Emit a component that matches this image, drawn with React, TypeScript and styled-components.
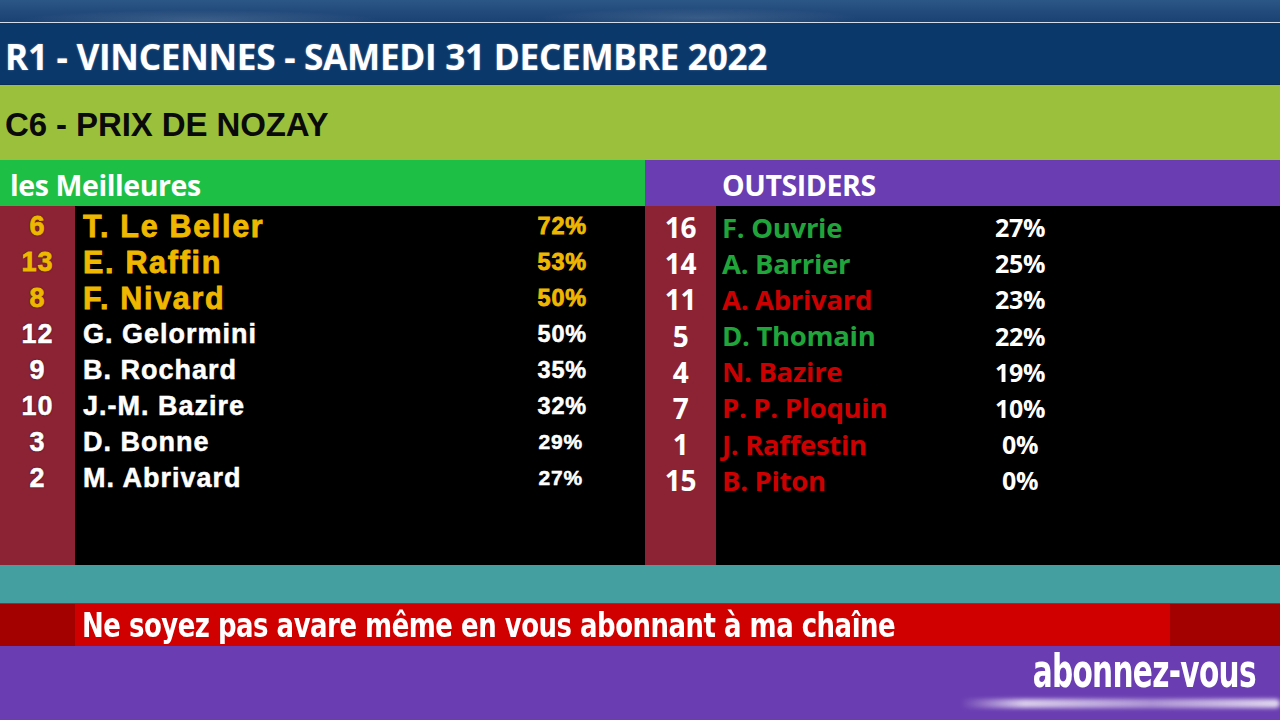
import React from 'react';
import styled, { createGlobalStyle } from 'styled-components';

const GlobalStyle = createGlobalStyle`
  html, body { margin: 0; padding: 0; background: #000; }
  body { width: 1280px; height: 720px; overflow: hidden; }
`;

const Screen = styled.div`
  width: 1280px;
  height: 720px;
  display: flex;
  flex-direction: column;
  overflow: hidden;
`;

const TopStrip = styled.div`
  flex: none;
  height: 22px;
  border-bottom: 1px solid #d3dde9;
  background:
    radial-gradient(ellipse 180px 10px at 200px 20px, rgba(255,255,255,0.14), transparent),
    radial-gradient(ellipse 160px 10px at 700px 18px, rgba(255,255,255,0.12), transparent),
    linear-gradient(180deg, #2b5786 0%, #21497a 60%, #1a4273 100%);
`;

const Header = styled.div`
  flex: none;
  height: 62px;
  box-sizing: border-box;
  display: flex;
  align-items: center;
  padding: 5px 0 0 5px;
  background: #0b386b;
  border-bottom: 1px solid #0a2f58;
  color: #fff;
  font-family: "Open Sans", sans-serif;
  font-weight: 700;
  font-size: 35.2px;
  letter-spacing: -0.3px;
  text-shadow: 0 0 2px rgba(255, 255, 255, 0.35);
`;

const RaceTitle = styled.div`
  flex: none;
  height: 75px;
  box-sizing: border-box;
  display: flex;
  align-items: center;
  padding: 4px 0 0 5px;
  background: #9bc13c;
  color: #0a0a0a;
  font-family: "Liberation Sans", Arial, sans-serif;
  font-weight: 700;
  font-size: 33px;
  letter-spacing: -0.1px;
`;

const Board = styled.div`
  flex: none;
  height: 405px;
  display: grid;
  grid-template-columns: 645px 635px;
`;

const Panel = styled.div`
  display: flex;
  flex-direction: column;
`;

const SectionHead = styled.div<{ $bg: string; $indent: number }>`
  flex: none;
  height: 46px;
  box-sizing: border-box;
  display: flex;
  align-items: center;
  padding: 3px 0 0 ${(p) => p.$indent}px;
  background: ${(p) => p.$bg};
  color: #fff;
  font-family: "Open Sans", sans-serif;
  font-weight: 700;
  font-size: 28.5px;
  letter-spacing: -0.4px;
`;

const Body = styled.div<{ $num: number; $top: number }>`
  flex: 1;
  padding-top: ${(p) => p.$top}px;
  background: linear-gradient(90deg, #8b2335 0, #8b2335 ${(p) => p.$num}px, #000 ${(p) => p.$num}px);
`;

const LeftRow = styled.div<{ $color: string; $big: boolean }>`
  height: 36px;
  display: grid;
  grid-template-columns: 75px 1fr 90px;
  align-items: center;
  padding-right: 58px;
  color: ${(p) => p.$color};
  font-family: "Liberation Sans", Arial, sans-serif;
  font-weight: 700;
  font-size: ${(p) => (p.$big ? 30.5 : 27)}px;
  letter-spacing: ${(p) => (p.$big ? 1.7 : 1)}px;
  -webkit-text-stroke: ${(p) => (p.$big ? 0.8 : 0.5)}px ${(p) => p.$color};
  text-shadow: 0 0 2px rgba(0, 0, 0, 0.9);
`;

const LeftNum = styled.span`
  text-align: center;
  font-size: 27px;
  letter-spacing: 1px;
`;

const LeftName = styled.span`
  padding-left: 8px;
  white-space: nowrap;
`;

const LeftPct = styled.span<{ $small: boolean }>`
  text-align: right;
  padding-right: ${(p) => (p.$small ? 4 : 0)}px;
  font-size: ${(p) => (p.$small ? 21 : 23.5)}px;
  letter-spacing: 0.8px;
`;

const RightRow = styled.div`
  height: 36.2px;
  display: grid;
  grid-template-columns: 71px 264px 80px;
  align-items: center;
  font-family: "Open Sans", sans-serif;
  font-weight: 700;
  font-size: 27.5px;
  letter-spacing: -0.3px;
`;

const RightNum = styled.span`
  text-align: center;
  color: #fff;
  font-size: 28px;
`;

const RightName = styled.span<{ $color: string }>`
  padding-left: 6px;
  white-space: nowrap;
  color: ${(p) => p.$color};
`;

const RightPct = styled.span`
  text-align: center;
  color: #fff;
  font-size: 25px;
`;

const TealBand = styled.div`
  flex: none;
  height: 38px;
  background: #449fa1;
`;

const Ticker = styled.div`
  flex: none;
  height: 43px;
  display: grid;
  grid-template-columns: 75px 1095px 1fr;
  border-top: 1px solid #9b2a3a;
  box-sizing: border-box;
`;

const TickerEdge = styled.div`
  background: #a30000;
`;

const TickerText = styled.div`
  display: flex;
  align-items: center;
  padding-left: 7px;
  background: #d10000;
  color: #fff;
  font-family: "DejaVu Sans Condensed", "DejaVu Sans", sans-serif;
  font-weight: 700;
  font-size: 34px;
  letter-spacing: -0.6px;
  white-space: nowrap;
  overflow: hidden;
`;

const Squeeze = styled.span<{ $x: number; $origin: string }>`
  display: inline-block;
  transform: scaleX(${(p) => p.$x});
  transform-origin: ${(p) => p.$origin} center;
`;

const Footer = styled.div`
  flex: 1;
  display: flex;
  flex-direction: column;
  align-items: flex-end;
  background: #6a3db2;
`;

const Subscribe = styled.div`
  margin: 0 24px 0 0;
  height: 48px;
  color: #fff;
  font-family: "DejaVu Sans Condensed", "DejaVu Sans", sans-serif;
  font-weight: 700;
  font-size: 47px;
  line-height: 50px;
  letter-spacing: -1px;
  white-space: nowrap;
`;

const Streak = styled.div`
  width: 320px;
  height: 9px;
  margin-top: 5px;
  background: linear-gradient(90deg, rgba(255,255,255,0) 0%, rgba(255,255,255,0.75) 20%, rgba(255,255,255,0.45) 60%, rgba(255,255,255,0.8) 100%);
  filter: blur(2px);
  border-radius: 5px;
`;

const GOLD = '#efb800';
const GREEN = '#20a53b';
const RED = '#cc0000';

const best = [
  { n: '6', name: 'T. Le Beller', pct: '72%', top: true },
  { n: '13', name: 'E. Raffin', pct: '53%', top: true },
  { n: '8', name: 'F. Nivard', pct: '50%', top: true },
  { n: '12', name: 'G. Gelormini', pct: '50%', top: false },
  { n: '9', name: 'B. Rochard', pct: '35%', top: false },
  { n: '10', name: 'J.-M. Bazire', pct: '32%', top: false },
  { n: '3', name: 'D. Bonne', pct: '29%', top: false },
  { n: '2', name: 'M. Abrivard', pct: '27%', top: false },
];

const outsiders = [
  { n: '16', name: 'F. Ouvrie', pct: '27%', c: GREEN },
  { n: '14', name: 'A. Barrier', pct: '25%', c: GREEN },
  { n: '11', name: 'A. Abrivard', pct: '23%', c: RED },
  { n: '5', name: 'D. Thomain', pct: '22%', c: GREEN },
  { n: '4', name: 'N. Bazire', pct: '19%', c: RED },
  { n: '7', name: 'P. P. Ploquin', pct: '10%', c: RED },
  { n: '1', name: 'J. Raffestin', pct: '0%', c: RED },
  { n: '15', name: 'B. Piton', pct: '0%', c: RED },
];

export default function App() {
  return (
    <Screen>
      <GlobalStyle />
      <TopStrip />
      <Header>R1 - VINCENNES - SAMEDI 31 DECEMBRE 2022</Header>
      <RaceTitle>C6 - PRIX DE NOZAY</RaceTitle>
      <Board>
        <Panel>
          <SectionHead $bg="#1dbf45" $indent={10}>les Meilleures</SectionHead>
          <Body $num={75} $top={2}>
            {best.map((r, i) => (
              <LeftRow key={r.n} $color={r.top ? GOLD : '#ffffff'} $big={r.top}>
                <LeftNum>{r.n}</LeftNum>
                <LeftName>{r.name}</LeftName>
                <LeftPct $small={i >= 6}>{r.pct}</LeftPct>
              </LeftRow>
            ))}
          </Body>
        </Panel>
        <Panel>
          <SectionHead $bg="#6a3db2" $indent={77}>OUTSIDERS</SectionHead>
          <Body $num={71} $top={2}>
            {outsiders.map((r) => (
              <RightRow key={r.n}>
                <RightNum>{r.n}</RightNum>
                <RightName $color={r.c}>{r.name}</RightName>
                <RightPct>{r.pct}</RightPct>
              </RightRow>
            ))}
          </Body>
        </Panel>
      </Board>
      <TealBand />
      <Ticker>
        <TickerEdge />
        <TickerText>
          <Squeeze $x={0.85} $origin="left">Ne soyez pas avare même en vous abonnant à ma chaîne</Squeeze>
        </TickerText>
        <TickerEdge />
      </Ticker>
      <Footer>
        <Subscribe>
          <Squeeze $x={0.7} $origin="right">abonnez-vous</Squeeze>
        </Subscribe>
        <Streak />
      </Footer>
    </Screen>
  );
}
